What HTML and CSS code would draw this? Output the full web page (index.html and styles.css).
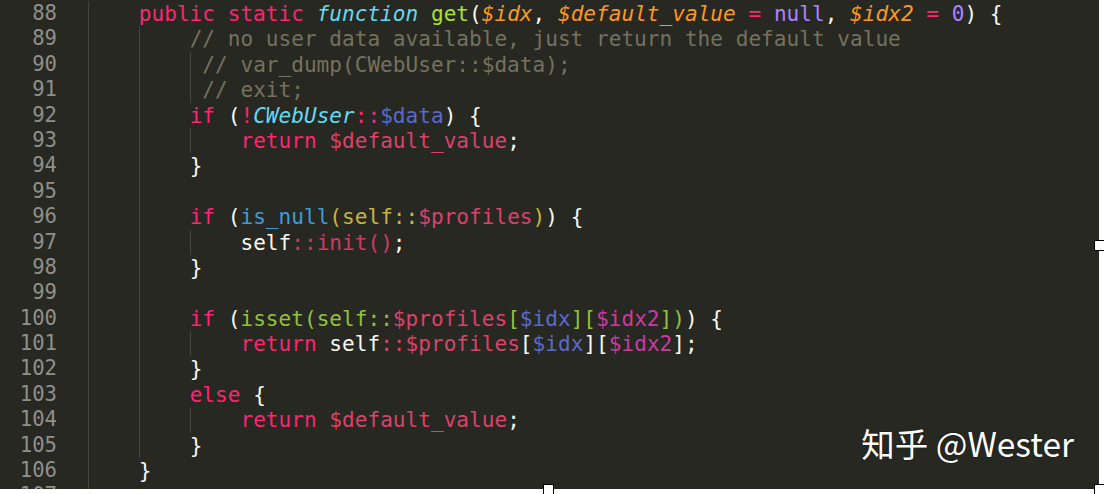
FILE: index.html
```html
<!DOCTYPE html>
<html lang="en">
<head>
<meta charset="utf-8">
<title>Code</title>
<link rel="stylesheet" href="styles.css">
</head>
<body>
<div class="shot">
  <div class="editor">
    <div class="gutter">
      <div>88</div><div>89</div><div>90</div><div>91</div><div>92</div><div>93</div><div>94</div><div>95</div><div>96</div><div>97</div><div>98</div><div>99</div><div>100</div><div>101</div><div>102</div><div>103</div><div>104</div><div>105</div><div>106</div><div>107</div>
    </div>
    <div class="code">
<div class="ln"><i class="g">    </i><span class="kw">public</span> <span class="kw">static</span> <span class="fn">function</span> <span class="nm">get</span><span class="pl">(</span><span class="pa">$idx</span><span class="pl">, </span><span class="pa">$default_value</span> <span class="kw">=</span> <span class="cn">null</span><span class="pl">, </span><span class="pa">$idx2</span> <span class="kw">=</span> <span class="cn">0</span><span class="pl">) {</span></div>
<div class="ln"><i class="g">    </i><i class="g">    </i><span class="cm">// no user data available, just return the default value</span></div>
<div class="ln"><i class="g">    </i><i class="g">    </i><i class="g"> </i><span class="cm">// var_dump(CWebUser::$data);</span></div>
<div class="ln"><i class="g">    </i><i class="g">    </i><i class="g"> </i><span class="cm">// exit;</span></div>
<div class="ln"><i class="g">    </i><i class="g">    </i><span class="kw">if</span> <span class="pl">(</span><span class="kw">!</span><span class="fn">CWebUser</span><span class="kw">::</span><span class="da">$data</span><span class="pl">) {</span></div>
<div class="ln"><i class="g">    </i><i class="g">    </i><i class="g">    </i><span class="kw">return</span> <span class="va">$default_value</span><span class="pl">;</span></div>
<div class="ln"><i class="g">    </i><i class="g">    </i><span class="pl">}</span></div>
<div class="ln"><i class="g">    </i><i class="g">    </i></div>
<div class="ln"><i class="g">    </i><i class="g">    </i><span class="kw">if</span> <span class="pl">(</span><span class="bi">is_null</span><span class="ye">(self::</span><span class="va">$profiles</span><span class="ye">)</span><span class="pl">) {</span></div>
<div class="ln"><i class="g">    </i><i class="g">    </i><i class="g">    </i><span class="pl">self</span><span class="dm">::init()</span><span class="pl">;</span></div>
<div class="ln"><i class="g">    </i><i class="g">    </i><span class="pl">}</span></div>
<div class="ln"><i class="g">    </i><i class="g">    </i></div>
<div class="ln"><i class="g">    </i><i class="g">    </i><span class="kw">if</span> <span class="pl">(</span><span class="gr">isset(self::</span><span class="va">$profiles</span><span class="gr">[</span><span class="da">$idx</span><span class="gr">][</span><span class="mg">$idx2</span><span class="gr">])</span><span class="pl">) {</span></div>
<div class="ln"><i class="g">    </i><i class="g">    </i><i class="g">    </i><span class="kw">return</span> <span class="pl">self</span><span class="va">::$profiles</span><span class="pl">[</span><span class="da">$idx</span><span class="pl">][</span><span class="mg">$idx2</span><span class="pl">];</span></div>
<div class="ln"><i class="g">    </i><i class="g">    </i><span class="pl">}</span></div>
<div class="ln"><i class="g">    </i><i class="g">    </i><span class="kw">else</span> <span class="pl">{</span></div>
<div class="ln"><i class="g">    </i><i class="g">    </i><i class="g">    </i><span class="kw">return</span> <span class="va">$default_value</span><span class="pl">;</span></div>
<div class="ln"><i class="g">    </i><i class="g">    </i><span class="pl">}</span></div>
<div class="ln"><i class="g">    </i><span class="pl">}</span></div>
<div class="ln"><i class="g">    </i></div>
    </div>
    <div class="mark">知乎 @Wester</div>
  </div>
  <span class="handle h-right"></span>
  <span class="handle h-bottom"></span>
  <span class="handle h-corner"></span>
</div>
</body>
</html>
```

FILE: styles.css
```css
html, body {
  margin: 0;
  padding: 0;
  background: #ffffff;
}

.shot {
  position: relative;
  width: 1104px;
  height: 494px;
  overflow: hidden;
}

.editor {
  position: relative;
  width: 1099px;
  height: 489px;
  box-sizing: border-box;
  padding-top: 1px;
  background: #272822;
  display: grid;
  grid-template-columns: 57px 1fr;
  column-gap: 31px;
  overflow: hidden;
  font-family: "DejaVu Sans Mono", "Liberation Mono", monospace;
  font-size: 21.1px;
  line-height: 25.4px;
}

.gutter {
  text-align: right;
  color: #8f908a;
  font-size: 20.6px;
}

.gutter div {
  height: 25.4px;
}

.code {
  color: #f8f8f2;
}

.ln {
  height: 25.4px;
  white-space: pre;
}

.g {
  display: inline-block;
  vertical-align: top;
  height: 25.4px;
  font-style: normal;
  background: linear-gradient(#45463e, #45463e) no-repeat left top / 1px 100%;
}

.kw { color: #f92672; }
.fn { color: #66d9ef; font-style: italic; }
.nm { color: #a6e22e; }
.pa { color: #fd971f; font-style: italic; }
.cn { color: #ae81ff; }
.pl { color: #f8f8f2; }
.cm { color: #75715e; }
.da { color: #5a69cc; }
.va { color: #d9436b; }
.bi { color: #3f9bd6; }
.ye { color: #c9b43c; }
.dm { color: #c93d62; }
.gr { color: #92c23c; }
.mg { color: #c93aa2; }

.mark {
  position: absolute;
  right: 25px;
  top: 418px;
  font-family: "Noto Sans CJK SC", "Noto Sans", sans-serif;
  font-size: 33.5px;
  line-height: 50px;
  color: #ffffff;
  text-shadow: 0 0 2px rgba(0, 0, 0, 0.6);
}

.handle {
  position: absolute;
  width: 9px;
  height: 9px;
  background: #ffffff;
  border: 1px solid #000000;
}

.h-right { left: 1094px; top: 240px; }
.h-bottom { left: 543px; top: 484px; }
.h-corner { left: 1094px; top: 484px; }
```
